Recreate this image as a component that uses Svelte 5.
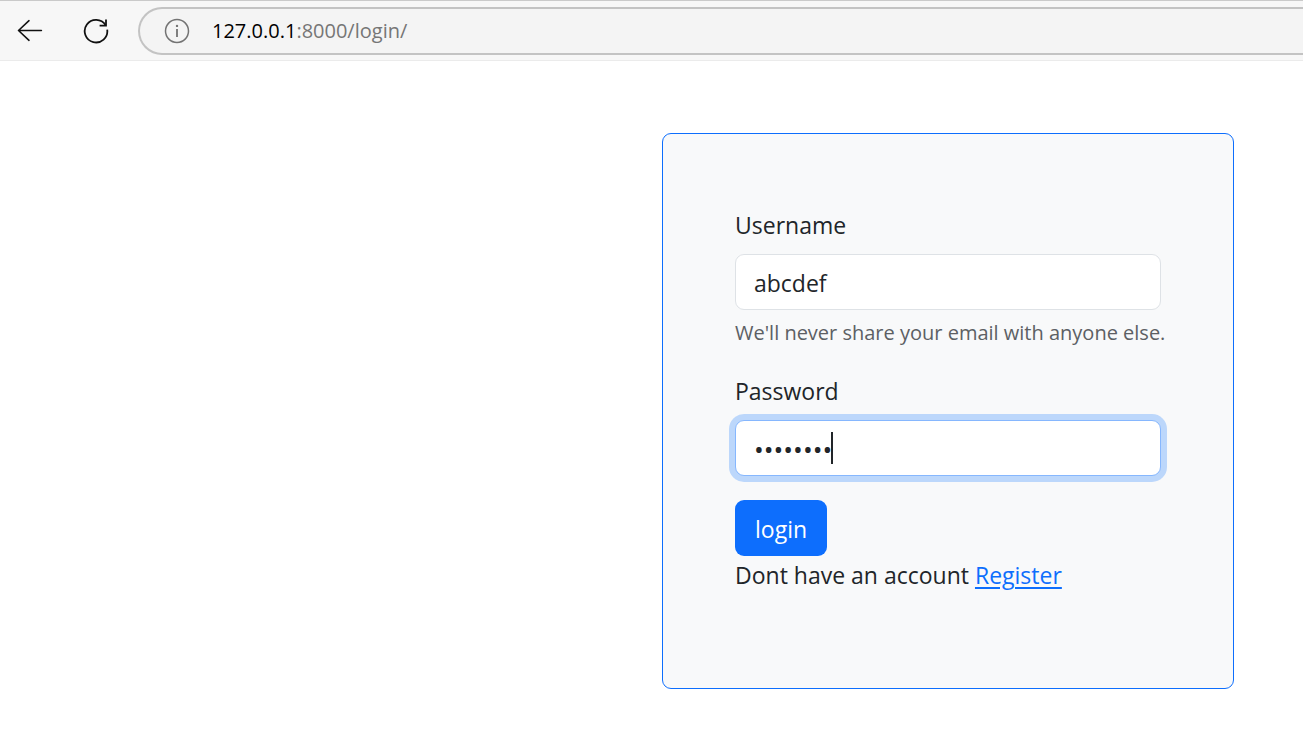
<script>
  let username = $state('abcdef');
  let password = $state('password');
</script>

<div class="browser">
  <header class="toolbar">
    <button class="tool back" type="button" aria-label="Back">
      <svg width="26" height="24" viewBox="0 0 26 24" fill="none" stroke="#111" stroke-width="1.6" stroke-linecap="round" stroke-linejoin="round">
        <path d="M24.4 11.5H1.5M12 1.7 1.5 11.5 12 21.3" />
      </svg>
    </button>
    <button class="tool" type="button" aria-label="Refresh">
      <svg width="26" height="26" viewBox="0 0 26 26" fill="none" stroke="#111" stroke-width="1.8">
        <path d="M24.2 11.6A11.3 11.3 0 1 1 22.6 7.2" />
        <path d="M23 1.4V7.7H16.6" />
      </svg>
    </button>
    <div class="address">
      <svg width="26" height="26" viewBox="0 0 26 26" fill="none" stroke="#737373" stroke-width="1.5" aria-hidden="true">
        <circle cx="13" cy="13" r="11.5" />
        <path d="M13 11v8" stroke-width="1.8" />
        <circle cx="13" cy="7.9" r="1.2" fill="#737373" stroke="none" />
      </svg>
      <span class="url"><span class="host">127.0.0.1</span>:8000/login/</span>
    </div>
  </header>

  <main>
    <form class="card" onsubmit={(e) => e.preventDefault()}>
      <div class="group">
        <label for="username">Username</label>
        <input id="username" type="text" bind:value={username} aria-describedby="help" />
        <div class="help" id="help">We'll never share your email with anyone else.</div>
      </div>
      <div class="group">
        <label for="password">Password</label>
        <div class="field">
          <input id="password" class="active" type="password" bind:value={password} />
          <span class="caret"></span>
        </div>
      </div>
      <button class="submit" type="submit">login</button>
      <p>Dont have an account <a href="#register">Register</a></p>
    </form>
  </main>
</div>

<style>
  :global(body) {
    background: #fff;
  }
  .browser {
    font-family: "Open Sans", "Noto Sans", sans-serif;
    font-size: 23px;
    line-height: 38px;
    color: #212529;
    overflow: hidden;
  }
  * {
    box-sizing: border-box;
  }
  .toolbar {
    display: flex;
    align-items: center;
    height: 61px;
    padding-left: 17px;
    background: #f7f7f7;
    border-top: 1px solid #cacaca;
    border-bottom: 1px solid #ebebeb;
  }
  .tool {
    display: flex;
    padding: 0;
    margin-right: 29px;
    border: 0;
    background: none;
  }
  .back {
    margin-right: 40px;
  }
  .address {
    display: flex;
    flex: 1;
    align-items: center;
    gap: 22px;
    height: 48px;
    padding-left: 24px;
    border: 2px solid #c3c3c3;
    border-right: 0;
    border-radius: 24px 0 0 24px;
    background: #f4f4f4;
  }
  .url {
    font-size: 20px;
    color: #767676;
  }
  .host {
    color: #000;
  }
  main {
    display: flex;
    justify-content: flex-end;
    padding: 72px 69px 49px;
  }
  .card {
    width: 572px;
    padding: 72px;
    border: 1px solid #0d6efd;
    border-radius: 9px;
    background: #f8f9fa;
  }
  .group {
    margin-bottom: 24px;
  }
  label {
    display: block;
    margin-bottom: 10px;
  }
  input {
    display: block;
    width: 100%;
    height: 56px;
    padding: 10px 18px 8px;
    border: 1px solid #dee2e6;
    border-radius: 9px;
    outline: 0;
    background: #fff;
    color: inherit;
    font: inherit;
    line-height: 36px;
  }
  .field {
    position: relative;
  }
  .active {
    border-color: #86b7fe;
    box-shadow: 0 0 0 6px #bcd7fb;
    font-size: 26px;
    caret-color: transparent;
  }
  .caret {
    position: absolute;
    top: 12px;
    left: 96px;
    width: 2px;
    height: 32px;
    background: #212529;
  }
  .help {
    margin-top: 6px;
    padding-top: 1px;
    font-size: 20px;
    line-height: 31px;
    white-space: nowrap;
    color: #5c6064;
  }
  .submit {
    display: block;
    height: 56px;
    padding: 2px 20px 0;
    border: 0;
    border-radius: 9px;
    background: #0d6efd;
    color: #fff;
    font: inherit;
  }
  p {
    margin: 0 0 22px;
  }
  a {
    color: #0d6efd;
    text-decoration-thickness: 2px;
    text-underline-offset: 3px;
  }
</style>
